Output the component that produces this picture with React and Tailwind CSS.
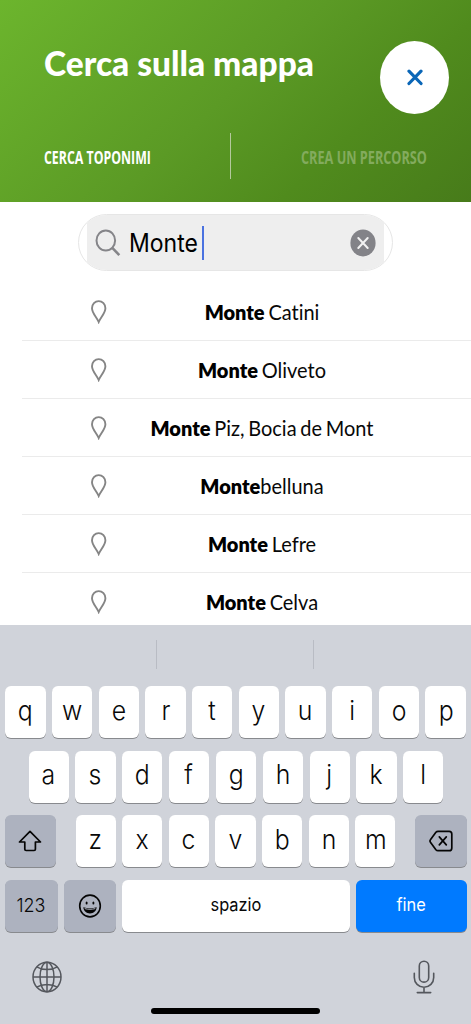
import clsx from 'clsx'

const results = [
  { match: 'Monte', rest: ' Catini' },
  { match: 'Monte', rest: ' Oliveto' },
  { match: 'Monte', rest: ' Piz, Bocia de Mont' },
  { match: 'Monte', rest: 'belluna' },
  { match: 'Monte', rest: ' Lefre' },
  { match: 'Monte', rest: ' Celva' },
]

function PinIcon() {
  return (
    <svg width="16" height="24" viewBox="0 0 16 24" fill="none" stroke="#858585" strokeWidth="1.9">
      <path d="M7.700 22C5.900 17.300 1 13.200 1 8.200a6.700 7.100 0 0 1 13.400 0c0 5-4.900 9.100-6.700 13.800Z" />
    </svg>
  )
}

function SearchIcon() {
  return (
    <svg width="26" height="28" viewBox="0 0 26 28" fill="none" stroke="#858589" strokeWidth="2">
      <ellipse cx="10.800" cy="11.500" rx="9.300" ry="10" />
      <path d="m17.300 18.800 7 7.300" strokeWidth="2.600" />
    </svg>
  )
}

function ClearIcon() {
  return (
    <svg width="26" height="28" viewBox="0 0 26 28" fill="none">
      <ellipse cx="13" cy="14" rx="12.600" ry="13.400" fill="#838388" />
      <path d="m8.300 9 9.400 10m0-10-9.400 10" stroke="#f1f1f1" strokeWidth="2" strokeLinecap="round" />
    </svg>
  )
}

function ShiftIcon() {
  return (
    <svg width="24" height="22" viewBox="0 0 24 22" fill="none" stroke="#050505" strokeWidth="1.700" strokeLinejoin="round">
      <path d="M12 1.300 22.500 12H17.400v7.200c0 .9-.5 1.300-1.300 1.300H8.100c-.9 0-1.300-.4-1.300-1.300V12H1.500Z" />
    </svg>
  )
}

function DeleteIcon() {
  return (
    <svg width="24" height="22" viewBox="0 0 24 22" fill="none" stroke="#050505" strokeWidth="1.700" strokeLinejoin="round" strokeLinecap="round">
      <path d="M9 1.300h11.200c1.600 0 2.600 1 2.600 2.800v13.800c0 1.800-1 2.800-2.600 2.800H9c-.9 0-1.500-.3-2.100-1L1.600 12.500c-.8-1-.8-2 0-3L6.900 2.300C7.500 1.600 8.100 1.300 9 1.300Z" />
      <path d="m10.300 6.900 7 8m0-8-7 8" />
    </svg>
  )
}

function SmileIcon() {
  return (
    <svg width="24" height="24" viewBox="0 0 24 24" fill="none" stroke="#050505">
      <ellipse cx="12" cy="12" rx="10.300" ry="10.900" strokeWidth="1.600" />
      <ellipse cx="8.600" cy="8.900" rx="1" ry="1.500" fill="#050505" stroke="none" />
      <ellipse cx="15.400" cy="8.900" rx="1" ry="1.500" fill="#050505" stroke="none" />
      <path d="M5.300 13.200c4 1.300 9.400 1.300 13.400 0-.5 4-3.200 6.200-6.700 6.200s-6.200-2.200-6.700-6.200Z" fill="#050505" stroke="none" />
      <path d="M6.700 14.600c3.300.9 7.300.9 10.600 0" strokeWidth="1" stroke="#adb2bf" />
    </svg>
  )
}

function GlobeIcon() {
  return (
    <svg width="30" height="32" viewBox="0 0 30 32" fill="none" stroke="#54575d" strokeWidth="1.500">
      <ellipse cx="15" cy="16" rx="14" ry="14.700" />
      <ellipse cx="15" cy="16" rx="7" ry="14.700" />
      <path d="M15 1v30M1 16h28M4.700 5.900c5.600 3.500 15 3.500 20.600 0M4.700 26.100c5.600-3.500 15-3.500 20.600 0" />
    </svg>
  )
}

function MicIcon() {
  return (
    <svg width="22" height="34" viewBox="0 0 22 34" fill="none" stroke="#54575d" strokeWidth="1.600" strokeLinecap="round">
      <rect x="6.300" y="1.300" width="9.400" height="20.800" rx="4.700" />
      <path d="M1.300 13.300v4.200c0 5.500 4.200 9.700 9.700 9.700s9.700-4.200 9.700-9.700v-4.200M11 27.200v5.300M4.300 32.600h13.400" />
    </svg>
  )
}

function Key({ label, className, children }) {
  return (
    <button
      className={clsx(
        'flex h-[52px] items-center justify-center rounded-[6px] shadow-[0_1px_0_#888a8e]',
        className
      )}
    >
      {label && <span className="-mt-[4px] scale-x-[0.920] text-[27px] leading-none font-[350]">{label}</span>}
      {children}
    </button>
  )
}

function LetterKeys({ letters }) {
  return letters.split('').map(letter => (
    <Key key={letter} label={letter} className="w-[40.200px] bg-white" />
  ))
}

function Keyboard() {
  return (
    <div className="flex h-[399px] flex-col bg-[#d0d3da] font-['Inter',sans-serif] text-[#080808]">
      <div className="flex h-[61px] pt-[15px]">
        <div className="h-[29px] w-[157px] border-r border-[#b9bcc4]" />
        <div className="h-[29px] w-[157px] border-r border-[#b9bcc4]" />
      </div>

      <div className="flex flex-col gap-[12.600px]">
        <div className="flex justify-between px-[4.500px]">
          <Key label="q" className="w-[41.200px] bg-white" />
          <LetterKeys letters="wertyuio" />
          <Key label="p" className="w-[41.200px] bg-white" />
        </div>
        <div className="flex justify-between pr-[27.500px] pl-[28.500px]">
          <LetterKeys letters="asdfghjkl" />
        </div>
        <div className="flex justify-between px-[4.500px]">
          <Key className="w-[51.500px] bg-[#adb2bf]"><ShiftIcon /></Key>
          <div className="flex w-[320px] justify-between">
            <LetterKeys letters="zxcvbnm" />
          </div>
          <Key className="w-[51.500px] bg-[#adb2bf]"><DeleteIcon /></Key>
        </div>
        <div className="flex gap-[6px] px-[4.500px]">
          <Key className="w-[53px] bg-[#adb2bf]">
            <span className="scale-x-[0.970] text-[18.500px] font-[350]">123</span>
          </Key>
          <Key className="w-[52.500px] bg-[#adb2bf]"><SmileIcon /></Key>
          <Key className="flex-1 bg-white">
            <span className="-mt-[3px] scale-x-[0.910] text-[18px]">spazio</span>
          </Key>
          <Key className="w-[110.500px] bg-[#007aff] text-white">
            <span className="-mt-[3px] scale-x-[0.910] text-[18px]">fine</span>
          </Key>
        </div>
      </div>

      <div className="flex items-center justify-between pt-[28px] pr-[36px] pl-[31.500px]">
        <GlobeIcon />
        <MicIcon />
      </div>
      <div className="mx-auto mt-[14px] h-[6px] w-[169px] rounded-full bg-black" />
    </div>
  )
}

export default function App() {
  return (
    <div className="flex h-[1024px] w-[471px] flex-col overflow-hidden bg-white font-['Lato',sans-serif]">
      <header className="flex h-[202px] shrink-0 flex-col bg-[linear-gradient(137deg,#6cb52d_0%,#5b9a25_48%,#508b1d_72%,#477b1a_100%)] text-white">
        <div className="flex justify-between pt-[41px] pr-[22px] pl-[44px]">
          <h1 className="w-[290px] origin-left scale-x-[0.957] text-[35px] leading-[42px] font-black whitespace-nowrap">Cerca sulla mappa</h1>
          <button className="flex h-[73px] w-[69px] items-center justify-center rounded-[50%] bg-white">
            <svg width="16" height="17" viewBox="0 0 16 17" fill="none" stroke="#0a66b7" strokeWidth="3.200" strokeLinecap="round">
              <path d="m2 2.200 12 12.300m0-12.300L2 14.500" />
            </svg>
          </button>
        </div>
        <div className="mt-[19px] flex items-center font-['Open_Sans',sans-serif] text-[18.500px] leading-[47px] font-bold whitespace-nowrap">
          <div className="h-[46px] w-[231px] shrink-0 border-r border-[#b4c99d] pl-[44px]">
            <span className="inline-block origin-left scale-x-[0.667]">CERCA TOPONIMI</span>
          </div>
          <div className="h-[46px] w-[240px] overflow-hidden pl-[70px] text-[#83ab5e]">
            <span className="inline-block origin-left scale-x-[0.686]">CREA UN PERCORSO</span>
          </div>
        </div>
      </header>

      <main className="h-[423px] shrink-0 overflow-hidden">
        <div className="mx-auto mt-[12px] h-[57px] w-[315px] overflow-hidden rounded-[29px] border border-[#e6e6e6] px-[8px]">
          <div className="flex h-full items-center bg-[#eee] px-[8px]">
            <SearchIcon />
            <span className="mt-[2px] ml-[8px] w-[68px] origin-left scale-x-[0.920] font-['Inter',sans-serif] text-[25px] leading-none text-black">Monte</span>
            <div className="ml-[5px] h-[34px] w-[2px] bg-[#4a72e0]" />
            <div className="ml-auto"><ClearIcon /></div>
          </div>
        </div>

        <ul className="mt-[12px] ml-[22px]">
          {results.map(item => (
            <li key={item.rest} className="flex h-[58px] items-center border-b border-[#ebebeb]">
              <div className="ml-[69px] w-[16px]"><PinIcon /></div>
              <p className="-mt-[1px] ml-[20px] w-[270px] scale-x-[0.950] text-center text-[21px] leading-none [word-spacing:-1.400px] whitespace-pre text-[#080808] [font-variant-ligatures:none]">
                <b className="font-extrabold text-black">{item.match}</b>
                {item.rest}
              </p>
            </li>
          ))}
        </ul>
      </main>

      <Keyboard />
    </div>
  )
}
